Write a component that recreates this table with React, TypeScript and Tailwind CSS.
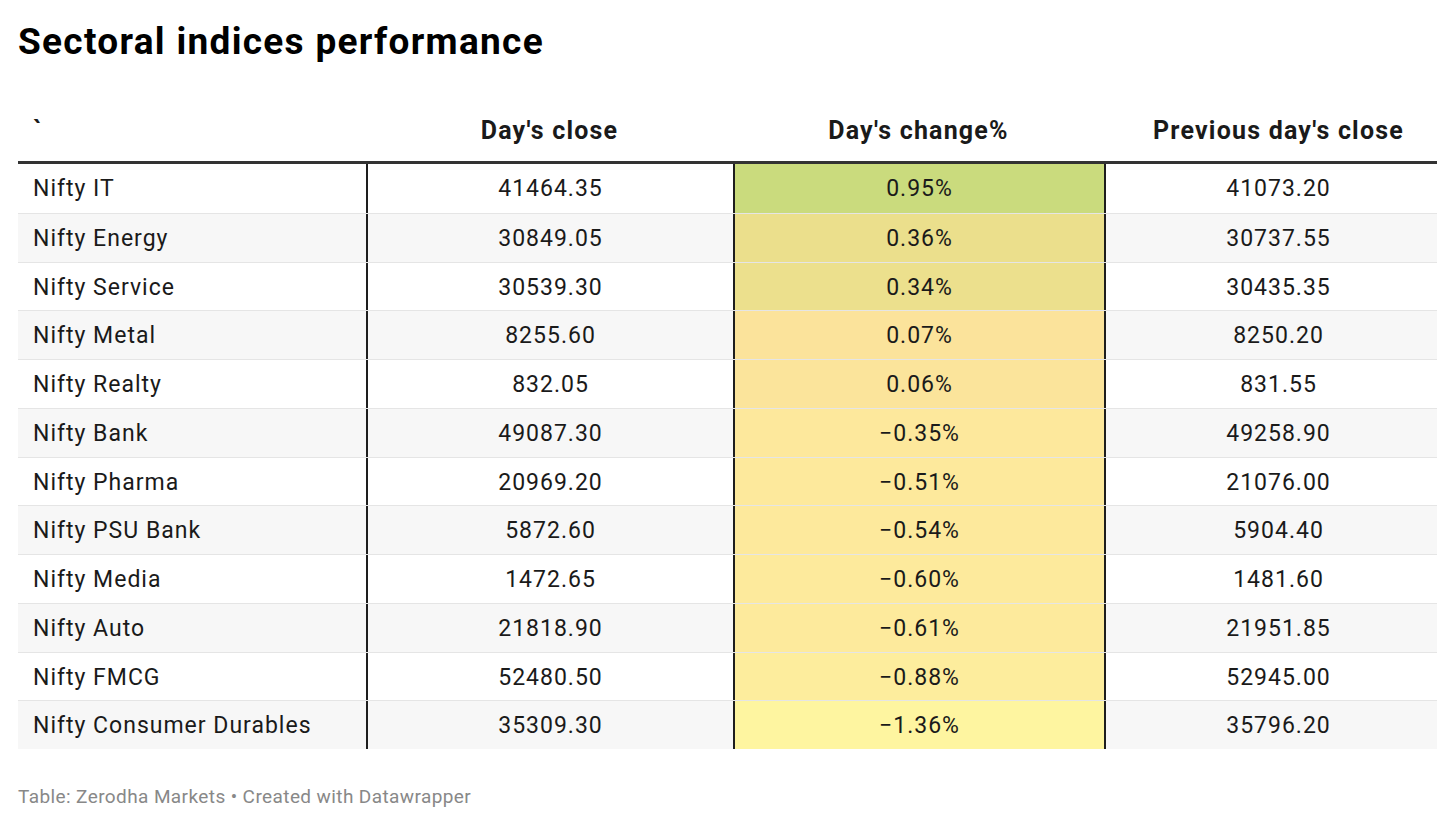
import React from 'react';

const rows = [
  { name: "Nifty IT", close: "41464.35", change: "0.95%", prev: "41073.20", color: "bg-[#cadb7d]" },
  { name: "Nifty Energy", close: "30849.05", change: "0.36%", prev: "30737.55", color: "bg-[#ebdf8c]" },
  { name: "Nifty Service", close: "30539.30", change: "0.34%", prev: "30435.35", color: "bg-[#ece08d]" },
  { name: "Nifty Metal", close: "8255.60", change: "0.07%", prev: "8250.20", color: "bg-[#fbe39b]" },
  { name: "Nifty Realty", close: "832.05", change: "0.06%", prev: "831.55", color: "bg-[#fbe49b]" },
  { name: "Nifty Bank", close: "49087.30", change: "\u22120.35%", prev: "49258.90", color: "bg-[#fde89c]" },
  { name: "Nifty Pharma", close: "20969.20", change: "\u22120.51%", prev: "21076.00", color: "bg-[#fde99c]" },
  { name: "Nifty PSU Bank", close: "5872.60", change: "\u22120.54%", prev: "5904.40", color: "bg-[#fde99c]" },
  { name: "Nifty Media", close: "1472.65", change: "\u22120.60%", prev: "1481.60", color: "bg-[#fdea9c]" },
  { name: "Nifty Auto", close: "21818.90", change: "\u22120.61%", prev: "21951.85", color: "bg-[#fdea9c]" },
  { name: "Nifty FMCG", close: "52480.50", change: "\u22120.88%", prev: "52945.00", color: "bg-[#fded9d]" },
  { name: "Nifty Consumer Durables", close: "35309.30", change: "\u22121.36%", prev: "35796.20", color: "bg-[#fef5a0]" },
];

export default function App() {
  return (
    <div className="w-[1456px] h-[828px] bg-white px-[18px] pt-[20px] text-[#1a1a1a]" style={{ fontFamily: "Roboto, 'Liberation Sans', sans-serif" }}>
      <h1 className="text-[37px] font-bold leading-[44px] tracking-[1.3px] text-black">Sectoral indices performance</h1>

      <div className="mt-[39px] w-[1419px]">
        <div className="flex h-[61px] items-end border-b-[3px] border-[#333] pb-[15px] text-[25px] font-bold leading-[30px] tracking-[1.2px] text-[#1a1a1a]">
          <div className="w-[348px] pl-[15px]">`</div>
          <div className="w-[367px] text-center">Day's close</div>
          <div className="w-[371px] text-center">Day's change%</div>
          <div className="w-[333px] pl-[16px] text-center">Previous day's close</div>
        </div>

        {rows.map((r, i) => (
          <div
            key={r.name}
            className={`flex h-[48.75px] text-[23px] leading-[50px] tracking-[1px] ${i % 2 === 1 ? "bg-[#f7f7f7]" : "bg-white"} ${i > 0 ? "border-t border-[#e5e5e5]" : ""}`}
          >
            <div className="w-[348px] pl-[15px]">{r.name}</div>
            <div className="w-[367px] border-l-2 border-[#1e1e1e] text-center">{r.close}</div>
            <div className={`w-[371px] border-l-2 border-[#1e1e1e] text-center ${r.color}`}>{r.change}</div>
            <div className="w-[333px] border-l-2 border-[#1e1e1e] pl-[14px] text-center">{r.prev}</div>
          </div>
        ))}
      </div>

      <p className="mt-[36px] text-[19px] leading-[24px] tracking-[0.4px] text-[#888888]">
        Table: Zerodha Markets • Created with Datawrapper
      </p>
    </div>
  );
}
